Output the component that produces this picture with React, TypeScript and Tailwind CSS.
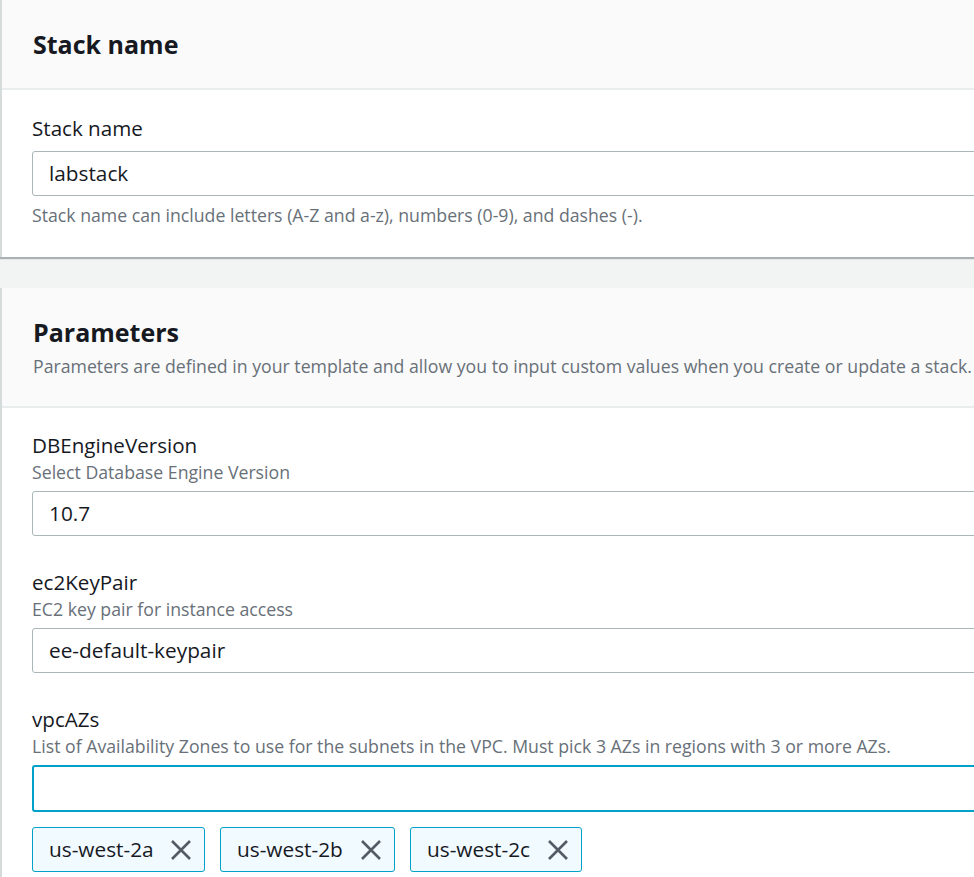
import React from "react";

const font = { fontFamily: '"Open Sans", "Noto Sans", Arial, sans-serif' };

function XIcon() {
  return (
    <svg width="22" height="22" viewBox="0 0 22 22" fill="none" stroke="#545b64" strokeWidth="2.6" strokeLinecap="butt">
      <path d="M2 2 L20 20 M20 2 L2 20" />
    </svg>
  );
}

function Field({ label, desc, value }: { label: string; desc: string; value: string }) {
  return (
    <div className="flex flex-col">
      <div className="text-[20.6px] leading-[28px] text-[#16191f]">{label}</div>
      <div className="text-[17.7px] leading-[26px] text-[#687078]">{desc}</div>
      <div className="mt-[6px] h-[45px] rounded-[3px] border border-[#aab7b8] flex items-center pl-[16px] text-[20.8px] text-[#16191f]">
        {value}
      </div>
    </div>
  );
}

function Token({ text, w }: { text: string; w: string }) {
  return (
    <div className={`${w} h-[45px] rounded-[3px] border border-[#00a1c9] bg-[#f1faff] flex items-center justify-between pl-[16px] pr-[12px] text-[20.8px] text-[#16191f]`}>
      <span>{text}</span>
      <XIcon />
    </div>
  );
}

export default function App() {
  return (
    <div style={font} className="w-[974px] h-[877px] overflow-hidden bg-[#f2f3f3]">
      <div className="w-[1010px] flex flex-col">
        {/* Stack name panel */}
        <div className="bg-white border-l-2 border-[#d5dbdb] shadow-[0_2px_1px_0_rgba(0,28,36,0.3)]">
          <div className="h-[90px] bg-[#fafafa] border-b-2 border-[#eaeded] flex items-center pl-[31px] pt-[2px]">
            <h2 className="text-[25px] font-bold text-[#16191f]">Stack name</h2>
          </div>
          <div className="pt-[24px] pl-[30px] pb-[29px] flex flex-col">
            <div className="text-[20.6px] leading-[28px] text-[#16191f]">Stack name</div>
            <div className="mt-[9px] h-[45px] rounded-[3px] border border-[#aab7b8] flex items-center pl-[16px] text-[20.8px] text-[#16191f]">
              labstack
            </div>
            <div className="mt-[6px] text-[17.7px] leading-[26px] text-[#687078]">
              Stack name can include letters (A-Z and a-z), numbers (0-9), and dashes (-).
            </div>
          </div>
        </div>

        <div className="h-[31px]" />

        {/* Parameters panel */}
        <div className="bg-white border-l-2 border-[#d5dbdb] h-[600px]">
          <div className="h-[120px] bg-[#fafafa] border-b-2 border-[#eaeded] flex flex-col pl-[31px] pt-[25px]">
            <h2 className="text-[25px] leading-[38px] font-bold text-[#16191f]">Parameters</h2>
            <p className="mt-[2px] text-[17.7px] leading-[26px] text-[#687078]">
              Parameters are defined in your template and allow you to input custom values when you create or update a stack.
            </p>
          </div>
          <div className="pl-[30px] pt-[23px] flex flex-col gap-[32px]">
            <Field label="DBEngineVersion" desc="Select Database Engine Version" value="10.7" />
            <Field label="ec2KeyPair" desc="EC2 key pair for instance access" value="ee-default-keypair" />
            <div className="flex flex-col">
              <div className="text-[20.6px] leading-[28px] text-[#16191f]">vpcAZs</div>
              <div className="text-[17.7px] leading-[26px] text-[#687078]">
                List of Availability Zones to use for the subnets in the VPC. Must pick 3 AZs in regions with 3 or more AZs.
              </div>
              <div className="mt-[6px] h-[47px] rounded-[3px] border-2 border-[#00a1c9]" />
              <div className="mt-[15px] flex gap-[15px]">
                <Token text="us-west-2a" w="w-[173px]" />
                <Token text="us-west-2b" w="w-[175px]" />
                <Token text="us-west-2c" w="w-[172px]" />
              </div>
            </div>
          </div>
        </div>
      </div>
    </div>
  );
}
